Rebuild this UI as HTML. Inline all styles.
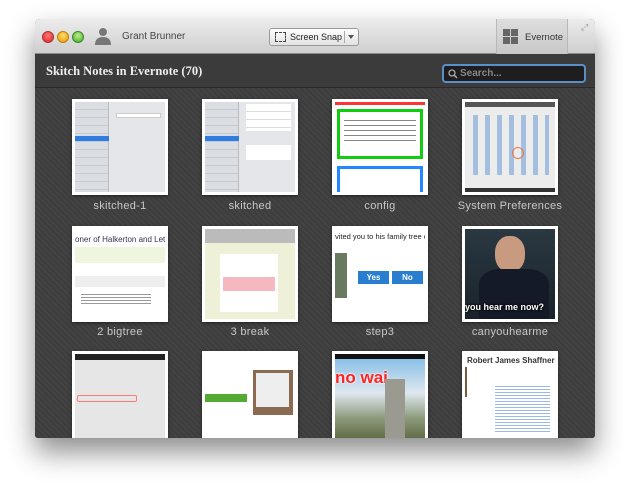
<!DOCTYPE html>
<html><head><meta charset="utf-8"><style>
*{margin:0;padding:0;box-sizing:border-box}
body{width:629px;height:487px;background:#fff;position:relative;overflow:hidden;font-family:"Liberation Sans",sans-serif}
.win{position:absolute;left:35px;top:19px;width:560px;height:419px;border-radius:5px 5px 3px 3px;overflow:hidden;box-shadow:0 14px 28px rgba(0,0,0,.45);background:#3e3e3e}
.tb{position:absolute;left:0;top:0;width:560px;height:35px;background:linear-gradient(#ececec,#cfcfcf);border-bottom:1px solid #8a8a8a}
.dot{position:absolute;top:12px;width:12px;height:12px;border-radius:50%}
.hdr{position:absolute;left:0;top:35px;width:560px;height:34px;background:#3b3b3b;border-bottom:1px solid #2a2a2a}
.content{position:absolute;left:0;top:69px;width:560px;height:350px;background:repeating-linear-gradient(45deg,#434343 0 2px,#3d3d3d 2px 4px)}
.th{position:absolute;width:96px;height:96px;background:#fff;padding:3px;box-shadow:0 1px 3px rgba(0,0,0,.5)}
.th>div{width:100%;height:100%;position:relative;overflow:hidden}
.lb{position:absolute;width:130px;text-align:center;color:#c8c8c8;font-size:11px;letter-spacing:.3px}
</style></head><body>
<div class="win">
 <div class="tb">
  <div class="dot" style="left:7px;background:radial-gradient(circle at 50% 35%,#f77,#d22);border:1px solid #a33"></div>
  <div class="dot" style="left:22px;background:radial-gradient(circle at 50% 35%,#fd6,#e99010);border:1px solid #b80"></div>
  <div class="dot" style="left:37px;background:radial-gradient(circle at 50% 35%,#be8,#4a2);border:1px solid #383"></div>
  <svg style="position:absolute;left:59px;top:8px" width="18" height="18" viewBox="0 0 18 18"><circle cx="9" cy="5" r="4" fill="#777"/><path d="M1 18 Q1 10 9 10 Q17 10 17 18Z" fill="#777"/></svg>
  <div style="position:absolute;left:87px;top:12px;font-size:10px;color:#444">Grant Brunner</div>
  <div style="position:absolute;left:234px;top:9px;width:90px;height:18px;border:1px solid #999;border-radius:3px;background:linear-gradient(#fff,#e2e2e2)">
   <div style="position:absolute;left:5px;top:3px;width:11px;height:10px;border:1.5px dashed #444"></div>
   <div style="position:absolute;left:20px;top:3px;font-size:9px;color:#222;white-space:nowrap">Screen Snap</div>
   <div style="position:absolute;left:74px;top:2px;width:1px;height:12px;background:#aaa"></div>
   <div style="position:absolute;left:78px;top:6px;border:3px solid transparent;border-top:4px solid #555"></div>
  </div>
  <div style="position:absolute;left:461px;top:0;width:72px;height:35px;background:linear-gradient(#dedede,#c8c8c8);border-left:1px solid #b8b8b8;border-right:1px solid #b8b8b8">
   <div style="position:absolute;left:6px;top:10px;width:15px;height:15px;background:#666"><div style="position:absolute;left:0;top:7px;width:15px;height:1px;background:#ccc"></div><div style="position:absolute;left:7px;top:0;width:1px;height:15px;background:#ccc"></div></div>
   <div style="position:absolute;left:28px;top:13px;font-size:9.5px;color:#333">Evernote</div>
  </div>
  <div style="position:absolute;left:546px;top:3px;font-size:9px;color:#999">⤢</div>
 </div>
 <div class="hdr">
  <div style="position:absolute;left:11px;top:10px;font-family:'Liberation Serif',serif;font-weight:bold;font-size:12.5px;color:#eee">Skitch Notes in Evernote (70)</div>
  <div style="position:absolute;left:407px;top:10px;width:144px;height:19px;border:2px solid #5b8fc9;border-radius:4px;background:#1e1e1e">
   <svg style="position:absolute;left:4px;top:3px" width="10" height="10" viewBox="0 0 10 10"><circle cx="4" cy="4" r="3" fill="none" stroke="#aaa" stroke-width="1.3"/><path d="M6 6 L9 9" stroke="#aaa" stroke-width="1.5"/></svg>
   <div style="position:absolute;left:16px;top:2px;font-size:10px;color:#888;font-weight:bold">Search...</div>
  </div>
 </div>
 <div class="content">
  <div class="th" style="left:37px;top:11px"><div style="background:#e4e6ea"><div style="position:absolute;left:0;top:0;width:38%;height:100%;background:repeating-linear-gradient(#dadde2 0 7px,#c8ccd2 7px 8px);border-right:1px solid #bbb"></div><div style="position:absolute;left:0;top:38%;width:38%;height:5px;background:#2f7de0"></div><div style="position:absolute;left:45%;top:12%;width:50%;height:5px;background:#fff;border:1px solid #ccc"></div></div></div>
  <div class="th" style="left:167px;top:11px"><div style="background:#e4e6ea"><div style="position:absolute;left:0;top:0;width:38%;height:100%;background:repeating-linear-gradient(#dadde2 0 7px,#c8ccd2 7px 8px);border-right:1px solid #bbb"></div><div style="position:absolute;left:0;top:38%;width:38%;height:5px;background:#2f7de0"></div><div style="position:absolute;left:45%;top:2%;width:50%;height:30%;background:repeating-linear-gradient(#fff 0 7px,#ddd 7px 8px)"></div><div style="position:absolute;left:45%;top:48%;width:50%;height:16%;background:#fff"></div></div></div>
  <div class="th" style="left:297px;top:11px"><div style="background:#fff"><div style="position:absolute;left:0;top:0;width:100%;height:3px;background:#f33"></div><div style="position:absolute;left:2px;top:7px;width:86px;height:50px;border:3px solid #1c1"><div style="margin:5px 4px;height:28px;background:repeating-linear-gradient(#fff 0 3px,#888 3px 4px,#fff 4px 5px)"></div></div><div style="position:absolute;left:2px;top:64px;width:86px;height:30px;border:3px solid #28f"></div></div></div>
  <div class="th" style="left:427px;top:11px"><div style="background:#ececec;border-top:5px solid #555;border-bottom:4px solid #333"><div style="position:absolute;left:4px;top:8px;width:80px;height:60px;background:repeating-linear-gradient(90deg,transparent 0 4px,#5a8fd0 4px 9px,transparent 9px 12px);opacity:.5"></div><div style="position:absolute;left:47px;top:40px;width:12px;height:12px;border:1.5px solid #e74;border-radius:50%"></div></div></div>
  <div class="lb" style="left:20px;top:112px">skitched-1</div>
  <div class="lb" style="left:150px;top:112px">skitched</div>
  <div class="lb" style="left:280px;top:112px">config</div>
  <div class="lb" style="left:410px;top:112px">System Preferences</div>
  <div class="th" style="left:37px;top:138px"><div style="background:#fff"><div style="position:absolute;left:0;top:6px;font-size:8px;color:#335;white-space:nowrap">oner of Halkerton and Lethen</div><div style="position:absolute;left:0;top:18px;width:100%;height:16px;background:#eef6e0"></div><div style="position:absolute;left:0;top:47px;width:100%;height:11px;background:#eee"></div><div style="position:absolute;left:6px;top:63px;width:70px;height:12px;background:repeating-linear-gradient(#fff 0 2px,#999 2px 3px)"></div></div></div>
  <div class="th" style="left:167px;top:138px"><div style="background:#eef0d8"><div style="position:absolute;left:0;top:0;width:100%;height:14px;background:#bbb"></div><div style="position:absolute;left:15px;top:25px;width:58px;height:58px;background:#fff"></div><div style="position:absolute;left:18px;top:48px;width:52px;height:14px;background:#f6b8c0"></div></div></div>
  <div class="th" style="left:297px;top:138px"><div style="background:#fff"><div style="position:absolute;left:0;top:3px;font-size:7.5px;color:#222;white-space:nowrap">vited you to his family tree on G</div><div style="position:absolute;left:0;top:24px;width:12px;height:45px;background:#6a7a60"></div><div style="position:absolute;left:23px;top:42px;width:31px;height:13px;background:#2a7ed0;color:#fff;font-size:8px;font-weight:bold;text-align:center;line-height:13px">Yes</div><div style="position:absolute;left:57px;top:42px;width:31px;height:13px;background:#2a7ed0;color:#fff;font-size:8px;font-weight:bold;text-align:center;line-height:13px">No</div></div></div>
  <div class="th" style="left:427px;top:138px"><div style="background:linear-gradient(#2a3842,#1b232a)"><div style="position:absolute;left:30px;top:7px;width:30px;height:36px;border-radius:45%;background:#c89a80"></div><div style="position:absolute;left:14px;top:40px;width:70px;height:50px;border-radius:30% 30% 0 0;background:#141a28"></div><div style="position:absolute;left:0;top:73px;font-size:9px;font-weight:bold;color:#fff;white-space:nowrap;text-shadow:0 0 2px #000,0 0 2px #000">you hear me now?</div></div></div>
  <div class="lb" style="left:20px;top:238px">2 bigtree</div>
  <div class="lb" style="left:150px;top:238px">3 break</div>
  <div class="lb" style="left:280px;top:238px">step3</div>
  <div class="lb" style="left:410px;top:238px">canyouhearme</div>
  <div class="th" style="left:37px;top:263px"><div style="background:#e6e6e6;border-top:6px solid #222"><div style="position:absolute;left:2px;top:35px;width:60px;height:7px;border:1.5px solid #f77;border-radius:2px"></div></div></div>
  <div class="th" style="left:167px;top:263px"><div style="background:#fff"><div style="position:absolute;left:48px;top:16px;width:40px;height:45px;background:#8a6a50"></div><div style="position:absolute;left:51px;top:19px;width:33px;height:34px;background:#eee"></div><div style="position:absolute;left:0;top:40px;width:42px;height:8px;background:#5a3"></div></div></div>
  <div class="th" style="left:297px;top:263px"><div style="background:linear-gradient(#8ac0e8,#dfe8ef 40%,#8a9a7a 70%,#56603a);border-top:5px solid #111"><div style="position:absolute;left:0;top:9px;font-size:17px;font-weight:bold;color:#f22;white-space:nowrap;text-shadow:0 0 2px #fff,0 0 2px #fff">no wai</div><div style="position:absolute;left:50px;top:20px;width:20px;height:60px;background:#9a9a90"></div></div></div>
  <div class="th" style="left:427px;top:263px"><div style="background:#fff"><div style="position:absolute;left:2px;top:2px;font-size:8px;font-weight:bold;color:#333;white-space:nowrap">Robert James Shaffner</div><div style="position:absolute;left:0;top:13px;width:2px;height:30px;background:#7a5a40"></div><div style="position:absolute;left:30px;top:30px;width:55px;height:50px;background:repeating-linear-gradient(#fff 0 2px,#9ab8e8 2px 3px)"></div></div></div>
 </div>
</div>
</body></html>
